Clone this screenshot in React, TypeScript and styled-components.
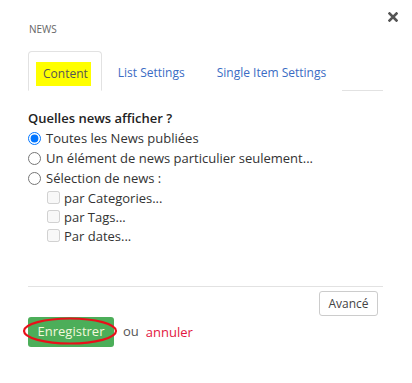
import React from "react";
import styled, { createGlobalStyle } from "styled-components";

const Global = createGlobalStyle`
  html, body { margin: 0; padding: 0; background: #fff; }
  body { font-family: "Open Sans", "Noto Sans", Arial, sans-serif; color: #333; }
  * { box-sizing: border-box; }
`;

const Page = styled.div`
  position: relative;
  width: 412px;
  height: 383px;
  padding: 21px 29px 0 28px;
`;

const Title = styled.div`
  font-size: 10px;
  line-height: 16px;
  color: #666;
  padding-left: 1px;
`;

const Close = styled.button`
  position: absolute;
  top: 11px;
  right: 13px;
  width: 12px;
  height: 12px;
  padding: 0;
  border: 0;
  background: none;
  display: flex;
  align-items: center;
  justify-content: center;
`;

const TabBar = styled.div`
  display: flex;
  align-items: stretch;
  margin-top: 14px;
  border-bottom: 1px solid #e2e2e2;
  height: 40px;
`;

const Tab = styled.div<{ $active?: boolean }>`
  display: flex;
  align-items: center;
  font-size: 12px;
  color: ${(p) => (p.$active ? "#555" : "#3a6cc4")};
  background: #fff;
  border: 1px solid ${(p) => (p.$active ? "#e2e2e2" : "transparent")};
  border-bottom-color: ${(p) => (p.$active ? "#fff" : "transparent")};
  border-radius: 4px 4px 0 0;
  margin-bottom: -1px;
  padding: ${(p) => (p.$active ? "5px 10px 0 7px" : "2px 15px 0 15px")};
`;

const Highlight = styled.span`
  background: #ffff00;
  padding: 3px 3px 3px 7px;
  line-height: 18px;
`;

const Form = styled.div`
  margin-top: 17px;
  display: flex;
  flex-direction: column;
  font-size: 13px;
  height: 178px;
`;

const Question = styled.div`
  font-weight: 600;
  color: #222;
  line-height: 20px;
`;

const RadioRow = styled.label`
  display: flex;
  align-items: center;
  height: 20px;
  color: #333;
`;

const Radio = styled.input`
  margin: 0 5px 0 0;
  width: 13px;
  height: 13px;
`;

const CheckRow = styled.label`
  display: flex;
  align-items: center;
  height: 19px;
  padding-left: 19px;
  color: #333;
`;

const Check = styled.input`
  margin: 0 4px 0 0;
  width: 13px;
  height: 13px;
`;

const SubList = styled.div`
  display: flex;
  flex-direction: column;
`;

const Footer = styled.div`
  border-top: 1px solid #e2e2e2;
  display: flex;
  justify-content: flex-end;
  padding-top: 4px;
`;

const GhostButton = styled.button`
  font-family: inherit;
  font-size: 12px;
  color: #444;
  background: #fff;
  border: 1px solid #ccc;
  border-radius: 3px;
  height: 25px;
  width: 59px;
  padding: 0;
  margin-right: 5px;
`;

const Actions = styled.div`
  position: relative;
  display: flex;
  align-items: center;
  margin-top: 1px;
  gap: 9px;
  font-size: 13px;
`;

const SaveButton = styled.button`
  font-family: inherit;
  font-size: 13px;
  color: #f3f8dc;
  background: #4cae59;
  border: 0;
  border-radius: 3px;
  height: 30px;
  width: 86px;
  padding: 0 0 2px;
`;

const Or = styled.span`
  color: #555;
  margin-top: -2px;
`;

const Cancel = styled.a`
  color: #e3163f;
  text-decoration: none;
  margin-left: -2px;
`;

const Annotation = styled.svg`
  position: absolute;
  left: -6px;
  top: -1px;
  pointer-events: none;
`;

export default function App() {
  return (
    <>
      <Global />
      <Page>
        <Title>NEWS</Title>
        <Close aria-label="close">
          <svg width="10" height="10" viewBox="0 0 10 10">
            <path d="M1.5 1.5 L8.5 8.5 M8.5 1.5 L1.5 8.5" stroke="#555" strokeWidth="2.6" strokeLinecap="square" />
          </svg>
        </Close>
        <TabBar>
          <Tab $active>
            <Highlight>Content</Highlight>
          </Tab>
          <Tab>List Settings</Tab>
          <Tab>Single Item Settings</Tab>
        </TabBar>
        <Form>
          <Question>Quelles news afficher ?</Question>
          <RadioRow>
            <Radio type="radio" name="news" defaultChecked />
            Toutes les News publiées
          </RadioRow>
          <RadioRow>
            <Radio type="radio" name="news" />
            Un élément de news particulier seulement...
          </RadioRow>
          <RadioRow>
            <Radio type="radio" name="news" />
            Sélection de news :
          </RadioRow>
          <SubList>
            <CheckRow>
              <Check type="checkbox" disabled />
              par Categories...
            </CheckRow>
            <CheckRow>
              <Check type="checkbox" disabled />
              par Tags...
            </CheckRow>
            <CheckRow>
              <Check type="checkbox" disabled />
              Par dates...
            </CheckRow>
          </SubList>
        </Form>
        <Footer>
          <GhostButton>Avancé</GhostButton>
        </Footer>
        <Actions>
          <SaveButton>Enregistrer</SaveButton>
          <Or>ou</Or>
          <Cancel href="#">annuler</Cancel>
          <Annotation width="100" height="32" viewBox="0 0 100 32">
            <ellipse cx="48" cy="15" rx="46" ry="12.5" fill="none" stroke="#e8101a" strokeWidth="2.2" />
          </Annotation>
        </Actions>
      </Page>
    </>
  );
}
